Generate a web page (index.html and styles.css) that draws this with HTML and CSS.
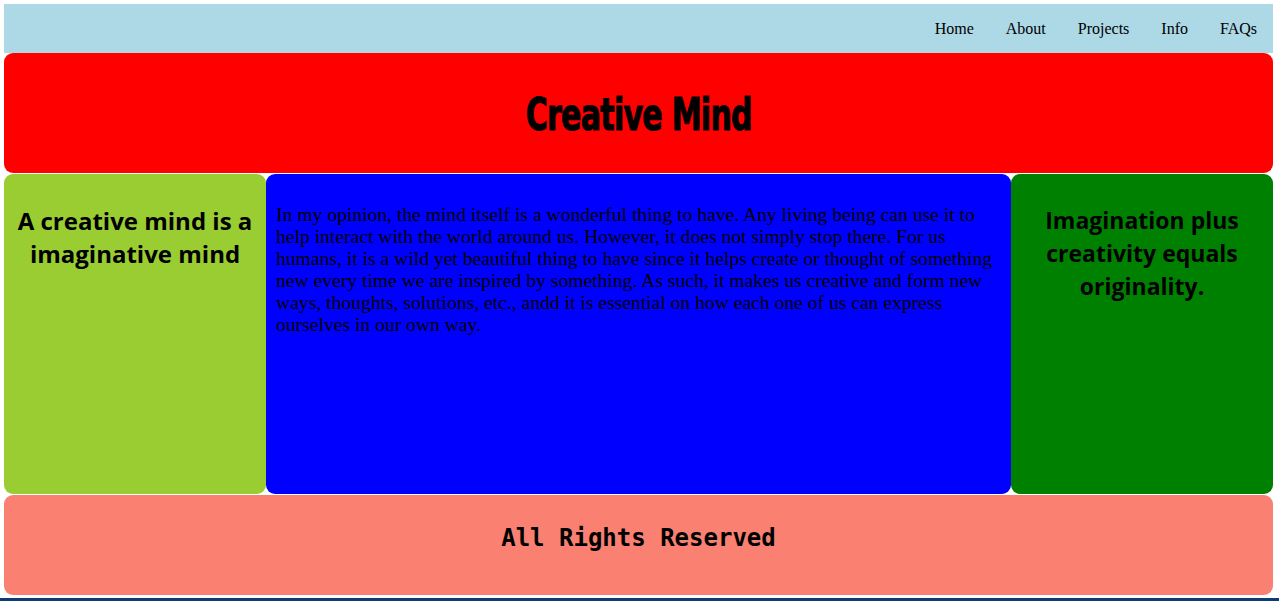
FILE: index.html
```html
<!DOCTYPE html>
<html lang="en">
<head>
<meta charset="utf-8">
<title>Creative Mind</title>
<link rel="stylesheet" href="styles.css">
</head>
<body>
<div class="page">
  <nav class="nav">
    <a href="#">Home</a>
    <a href="#">About</a>
    <a href="#">Projects</a>
    <a href="#">Info</a>
    <a href="#">FAQs</a>
  </nav>
  <header class="header">
    <h1 class="title">Creative Mind</h1>
  </header>
  <div class="columns">
    <aside class="side side-left">
      <h2 class="quote">A creative mind is a imaginative mind</h2>
    </aside>
    <main class="main">
      <p class="text">In my opinion, the mind itself is a wonderful thing to have. Any living being can use it to help interact with the world around us. However, it does not simply stop there. For us humans, it is a wild yet beautiful thing to have since it helps create or thought of something new every time we are inspired by something. As such, it makes us creative and form new ways, thoughts, solutions, etc., andd it is essential on how each one of us can express ourselves in our own way.</p>
    </main>
    <aside class="side side-right">
      <h2 class="quote">Imagination plus creativity equals originality.</h2>
    </aside>
  </div>
  <footer class="footer">
    <h3 class="rights">All Rights Reserved</h3>
  </footer>
</div>
<div class="bottom-bar"></div>
</body>
</html>
```

FILE: styles.css
```css
html, body {
  margin: 0;
  padding: 0;
  background: #ffffff;
}

.page {
  padding: 4px 6px 0 4px;
  display: flex;
  flex-direction: column;
}

.nav {
  height: 49px;
  background: #add8e6;
  display: flex;
  justify-content: flex-end;
  align-items: center;
}

.nav a {
  font-family: "Liberation Serif", "Times New Roman", serif;
  font-size: 16px;
  color: #000;
  text-decoration: none;
  padding: 0 16px;
  line-height: 1;
}

.header {
  height: 120px;
  background: #ff0000;
  border-radius: 9px;
  display: flex;
  align-items: center;
  justify-content: center;
}

.title {
  margin: 4px 0 0;
  font-family: "Impact", "DejaVu Sans Condensed", "Liberation Sans", sans-serif;
  font-weight: bold;
  font-size: 44px;
  color: #000;
  -webkit-text-stroke: 1px #000;
  letter-spacing: -1px;
  line-height: 1;
  transform: scaleX(0.76);
}

.columns {
  margin-top: 1px;
  height: 320px;
  display: grid;
  grid-template-columns: 262px 1fr 262px;
}

.side {
  border-radius: 9px;
  padding: 30px 8px 0;
  text-align: center;
}

.side-left {
  background: #9acd32;
}

.side-right {
  background: #008000;
  padding-left: 24px;
  padding-right: 24px;
}

.quote {
  margin: 0;
  font-family: "Comic Sans MS", "Open Sans", "DejaVu Sans", sans-serif;
  font-weight: bold;
  font-size: 24px;
  line-height: 33px;
  color: #000;
}

.side-right .quote {
  font-size: 23px;
}

.main {
  background: #0000ff;
  border-radius: 9px;
  padding: 10px;
}

.text {
  margin: 20px 0 0;
  font-family: "Liberation Serif", "Times New Roman", serif;
  font-size: 19.6px;
  line-height: 22px;
  color: #000;
}

.footer {
  margin-top: 1px;
  height: 100px;
  background: #fa8072;
  border-radius: 9px;
  display: flex;
  align-items: center;
  justify-content: center;
}

.rights {
  margin: 0 0 15px;
  font-family: "Consolas", "DejaVu Sans Mono", "Liberation Mono", monospace;
  font-weight: bold;
  font-size: 24px;
  color: #000;
}

.bottom-bar {
  margin-top: 3px;
  height: 8px;
  background: #0e3b73;
}
```
